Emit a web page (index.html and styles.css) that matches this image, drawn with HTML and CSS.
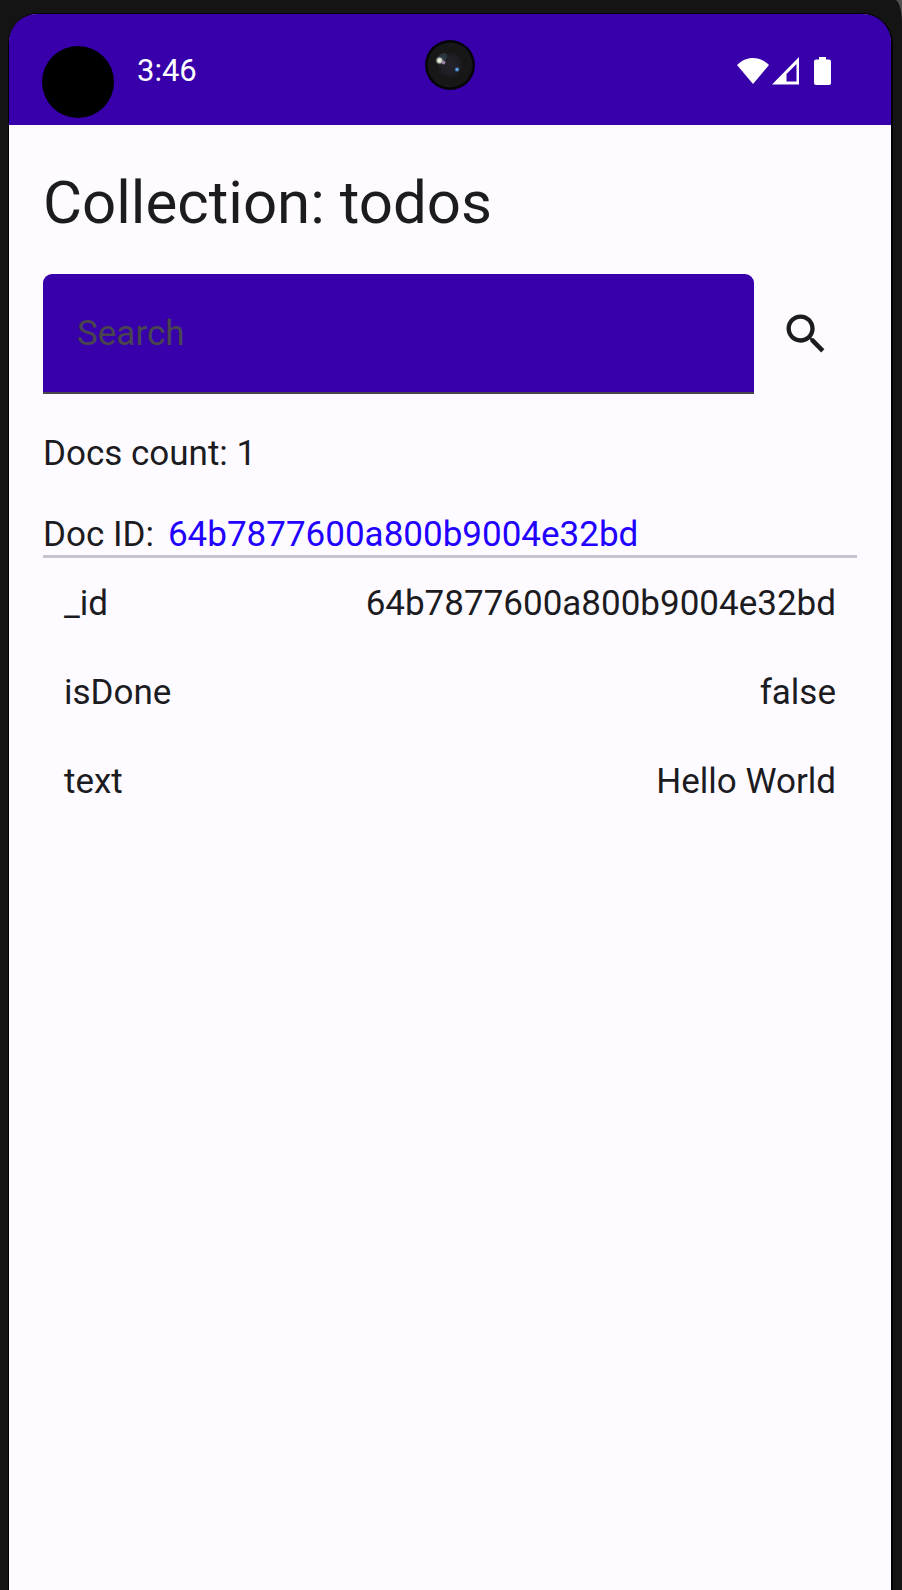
FILE: index.html
```html
<!DOCTYPE html>
<html lang="en">
<head>
<meta charset="utf-8">
<meta name="viewport" content="width=device-width, initial-scale=1">
<title>Collection: todos</title>
<link rel="stylesheet" href="styles.css">
</head>
<body>
<div class="device">
  <div class="screen">
    <header class="status-bar">
      <span class="cutout"></span>
      <svg class="camera" viewBox="0 0 50 50" aria-hidden="true">
        <defs>
          <radialGradient id="lens"><stop offset="0" stop-color="#24232b"/><stop offset="0.8" stop-color="#1d1d22"/><stop offset="1" stop-color="#171717"/></radialGradient>
          <radialGradient id="glow"><stop offset="0" stop-color="#fffff0"/><stop offset="0.5" stop-color="#c5cbb8"/><stop offset="1" stop-color="#3a4548" stop-opacity="0"/></radialGradient>
          <radialGradient id="blue"><stop offset="0" stop-color="#8fc4ff"/><stop offset="0.5" stop-color="#3f78b8"/><stop offset="1" stop-color="#203858" stop-opacity="0"/></radialGradient>
        </defs>
        <circle cx="25" cy="25" r="25" fill="#050507"/>
        <circle cx="25" cy="25" r="22.500" fill="#171717"/>
        <circle cx="25" cy="25" r="13" fill="url(#lens)"/>
        <ellipse cx="17" cy="18" rx="6" ry="4" fill="#40606c" opacity="0.4" transform="rotate(-45 17 18)"/>
        <circle cx="14.500" cy="20.500" r="4.500" fill="url(#glow)"/>
        <circle cx="18.500" cy="22.500" r="2" fill="#b592bd" opacity="0.8"/>
        <circle cx="32" cy="29.500" r="3" fill="url(#blue)"/>
      </svg>
      <time class="clock">3:46</time>
      <div class="indicators">
        <svg class="wifi" viewBox="0 0 32 28" aria-label="Wi-Fi" role="img"><path d="M0 8C9-1.500 23-1.500 32 8L16 27Z"/></svg>
        <svg class="signal" viewBox="0 0 28 28" aria-label="Signal" role="img"><path fill-rule="evenodd" d="M0 27.500L27 0V27.500ZM14.500 17V24.500H24.500V7Z"/></svg>
        <svg class="battery" viewBox="0 0 17 28" aria-label="Battery" role="img"><path d="M5 0H12V2.500H15Q17 2.500 17 4.500V26Q17 28 15 28H2Q0 28 0 26V4.500Q0 2.500 2 2.500H5Z"/></svg>
      </div>
    </header>
    <main class="content">
      <h1 class="title">Collection: todos</h1>
      <form class="search">
        <input class="search-field" type="text" placeholder="Search" aria-label="Search">
        <button class="search-button" type="button" aria-label="Run search">
          <svg class="search-icon" viewBox="0 0 24 24" aria-hidden="true"><path d="M15.500 14h-.79l-.28-.27C15.410 12.590 16 11.110 16 9.500 16 5.910 13.090 3 9.500 3S3 5.910 3 9.500 5.910 16 9.500 16c1.610 0 3.090-.59 4.230-1.570l.27.280v.79l5 4.990L20.490 19l-4.990-5zm-6 0C7.010 14 5 11.990 5 9.500S7.010 5 9.500 5 14 7.010 14 9.500 11.990 14 9.500 14z"/></svg>
        </button>
      </form>
      <p class="count">Docs count: 1</p>
      <section class="document">
        <p class="doc-head"><span>Doc ID:</span><a class="doc-link" href="#fields">64b7877600a800b9004e32bd</a></p>
        <table class="fields" id="fields">
          <tbody>
            <tr><th scope="row">_id</th><td>64b7877600a800b9004e32bd</td></tr>
            <tr><th scope="row">isDone</th><td>false</td></tr>
            <tr><th scope="row">text</th><td>Hello World</td></tr>
          </tbody>
        </table>
      </section>
    </main>
  </div>
</div>
</body>
</html>
```
FILE: styles.css
```css
* {
  box-sizing: border-box;
}

body {
  margin: 0;
  background: #505052;
  color: #1c1b1f;
  font-family: Roboto, "Liberation Sans", sans-serif;
  font-size: 35px;
  line-height: 40px;
}

.device {
  display: flex;
  min-height: 100vh;
  padding: 14px 11px 0 9px;
  border-top-right-radius: 7px 24px;
  background: #141414;
}

.screen {
  flex: 1;
  min-width: 0;
  border-radius: 30px 30px 0 0;
  background: #fdfbff;
  box-shadow: 0 0 0 1px #000, 1px 0 0 1px #020208;
}

.status-bar {
  position: relative;
  display: flex;
  align-items: center;
  justify-content: space-between;
  height: 111px;
  padding: 2px 60px 0 128px;
  border-radius: 28px 28px 0 0;
  background: #3700aa;
  color: #fff;
}

.cutout {
  position: absolute;
  top: 32px;
  left: 33px;
  width: 72px;
  height: 72px;
  border-radius: 50%;
  background: #000;
}

.camera {
  position: absolute;
  top: 26px;
  left: calc(50% - 25px);
  width: 50px;
  height: 50px;
}

.clock {
  font-size: 31px;
}

.indicators {
  display: flex;
  fill: currentColor;
}

.indicators svg {
  height: 28px;
}

.wifi {
  width: 32px;
}

.signal {
  width: 28px;
  margin-left: 3px;
}

.battery {
  width: 17px;
  margin-left: 14px;
}

.content {
  padding: 42px 34px;
}

.title {
  margin: 0 0 35px;
  font-size: 60px;
  font-weight: 400;
  line-height: 72px;
}

.search {
  display: flex;
  margin-bottom: 40px;
}

.search-field {
  flex: 1;
  min-width: 0;
  height: 120px;
  padding: 0 34px;
  border: 0;
  border-bottom: 2px solid #49454f;
  border-radius: 9px 9px 0 0;
  background: #3700aa;
  color: #fff;
  font: inherit;
}

.search-field::placeholder {
  color: #49454f;
  opacity: 1;
}

.search-button {
  display: flex;
  align-items: center;
  justify-content: center;
  width: 103px;
  padding: 0;
  border: 0;
  background: none;
}

.search-icon {
  width: 52px;
  height: 52px;
  fill: #1c1b1f;
}

.count {
  margin: 0 0 41px;
}

.doc-head {
  display: flex;
  gap: 14px;
  margin: 0 0 1px;
  border-bottom: 3px solid #c9c5d0;
}

.doc-link {
  color: #2200ff;
  text-decoration: none;
}

.fields {
  width: 100%;
  border-collapse: collapse;
}

.fields th,
.fields td {
  height: 89px;
  padding: 0 21px;
  font-weight: 400;
  text-align: left;
}

.fields td {
  text-align: right;
}
```
